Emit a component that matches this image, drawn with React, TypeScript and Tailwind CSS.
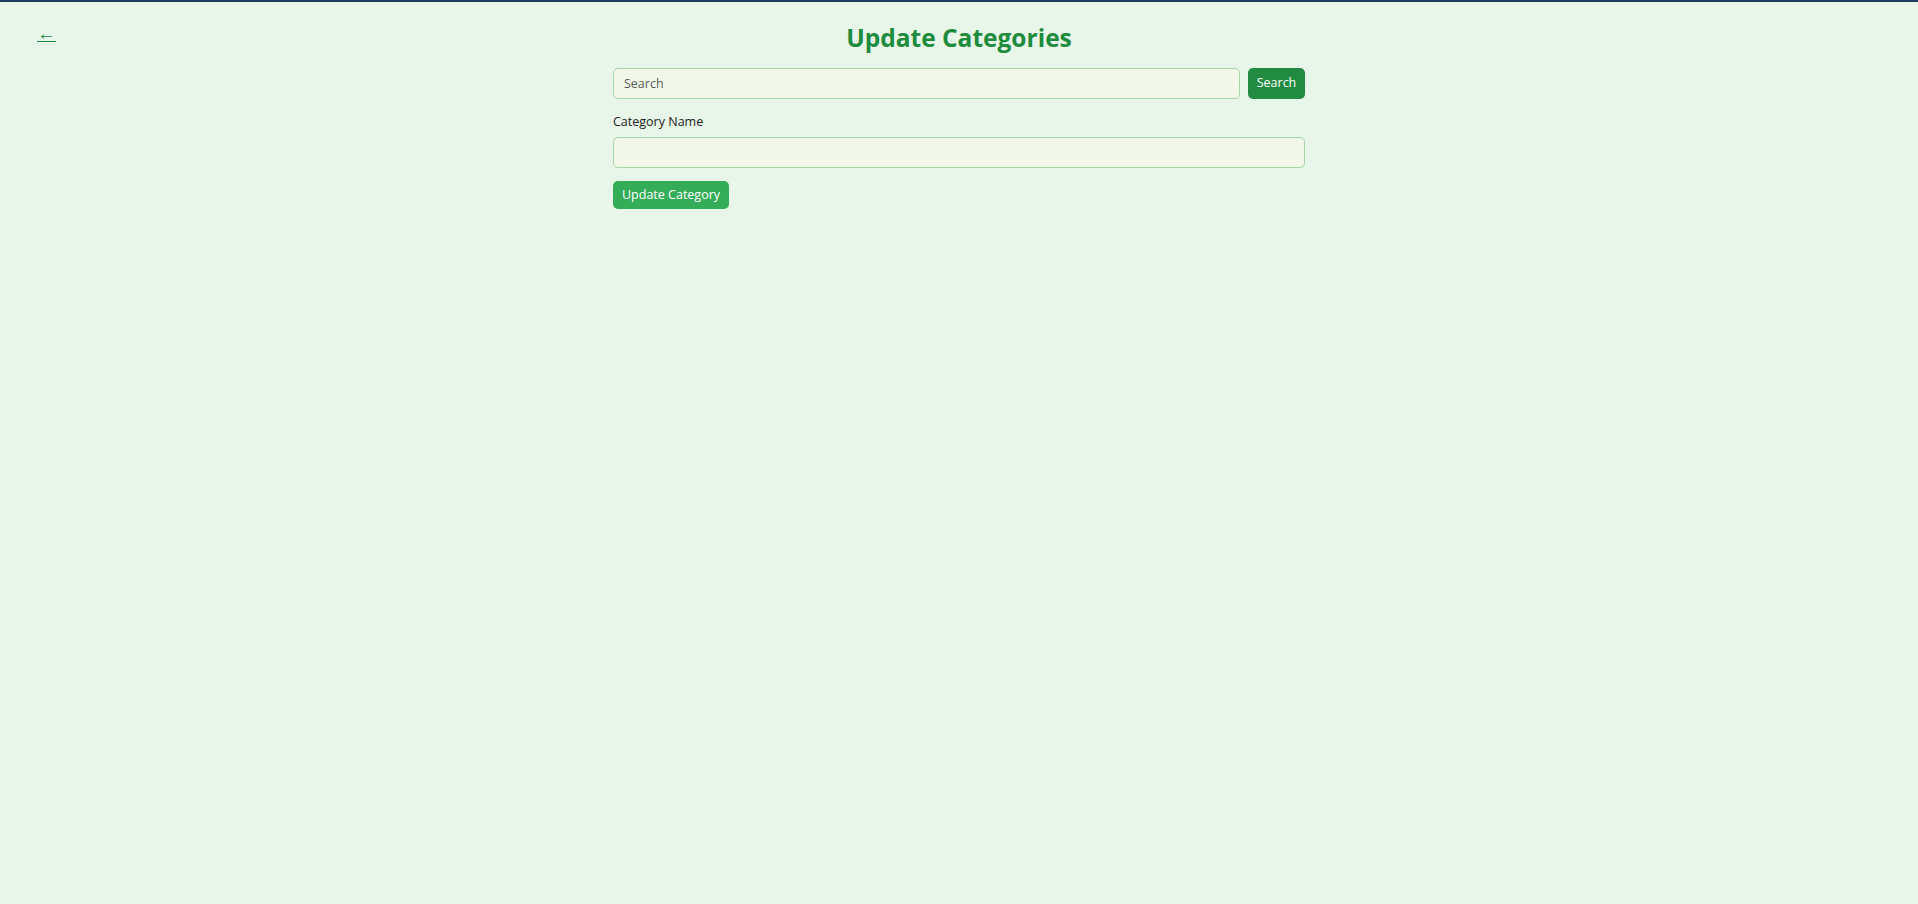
import React, { useState } from 'react';

export default function App() {
  const [query, setQuery] = useState('');
  const [name, setName] = useState('');

  return (
    <div className="min-h-screen bg-[#e8f5e9] font-['Open_Sans',sans-serif]">
      <div className="h-[2px] bg-[#1e3a5c]" />

      <div className="grid grid-cols-[1fr_auto_1fr] items-start px-[37px] pt-[18px]">
        <a href="#" className="mt-[1px] justify-self-start text-[19px] leading-[24px] text-[#1e8b3d] underline">
          ←
        </a>
        <h1 className="text-[24.5px] leading-[36px] font-bold text-[#1e8b3d]">Update Categories</h1>
        <div />
      </div>

      <div className="mx-auto mt-[12px] w-[692px]">
        <div className="flex gap-2">
          <input
            value={query}
            onChange={(e) => setQuery(e.target.value)}
            placeholder="Search"
            className="h-[31px] flex-1 rounded-[5px] border border-[#a5d6a7] bg-[#f1f8e9] px-[10px] text-[12.5px] text-[#333] placeholder:text-[#5a5a5a] outline-none"
          />
          <button className="h-[31px] w-[57px] rounded-[5px] bg-[#218c41] text-[12.5px] text-white">Search</button>
        </div>

        <label className="mt-[14px] block text-[12.5px] leading-[18px] text-[#222]">Category Name</label>
        <input
          value={name}
          onChange={(e) => setName(e.target.value)}
          className="mt-[6px] block h-[31px] w-full rounded-[5px] border border-[#a5d6a7] bg-[#f1f8e9] px-[10px] text-[13px] outline-none"
        />

        <button className="mt-[13px] h-[28px] rounded-[5px] bg-[#34ad58] px-[9px] text-[12.5px] text-white">
          Update Category
        </button>
      </div>
    </div>
  );
}
